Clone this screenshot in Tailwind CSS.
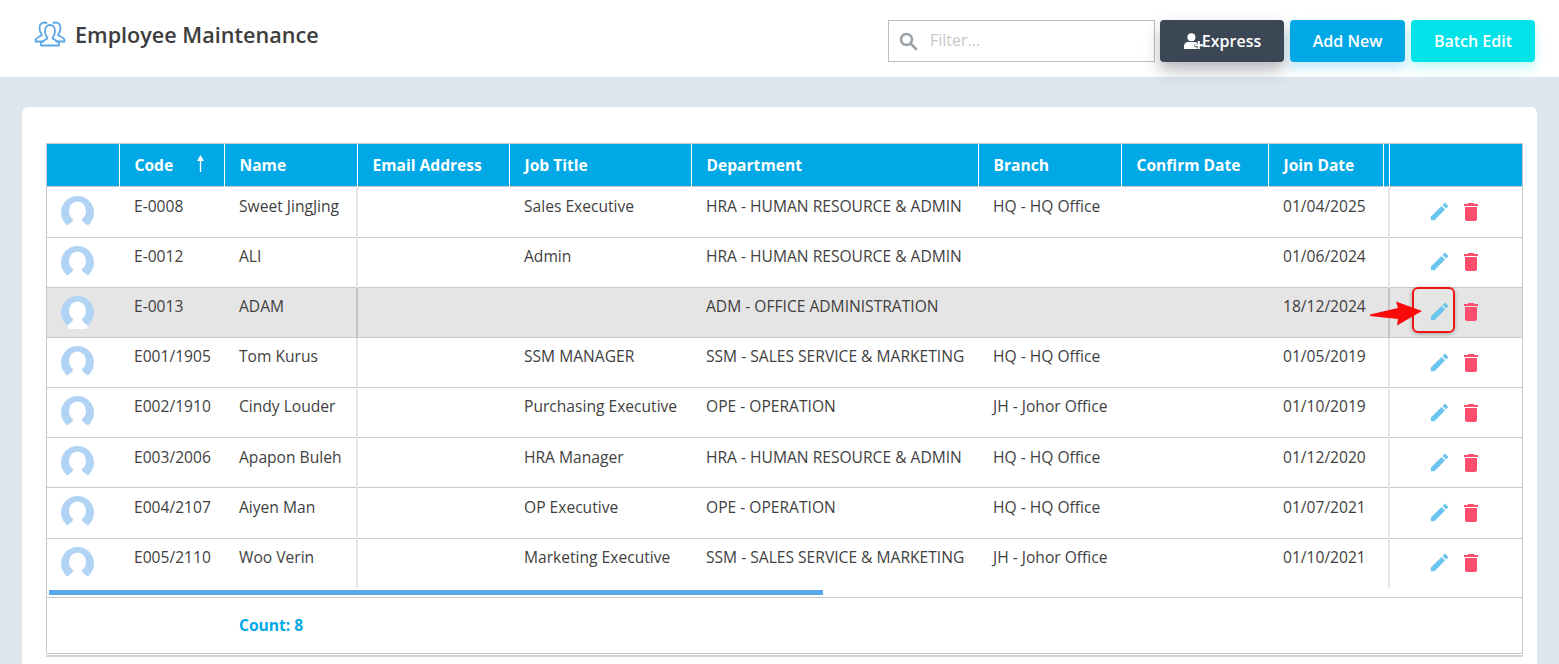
<!DOCTYPE html>
<html lang="en">
<head>
  <meta charset="UTF-8">
  <title>Employee Maintenance</title>
  <script src="https://cdn.jsdelivr.net/npm/@tailwindcss/browser@4"></script>
</head>
<body class="bg-[#dde5ed] h-[664px] overflow-hidden font-['Open_Sans',sans-serif] text-[#3a3a3a]">

  <svg class="hidden">
    <symbol id="avatar" viewBox="0 0 33 33">
      <circle cx="16.5" cy="16.5" r="16.5" fill="#b1d4f4"/>
      <ellipse cx="16.5" cy="15" rx="8.500" ry="9.500" fill="#fff"/>
      <path d="M12.500 20 C13 24 11 26.500 6 29.500 L8 33 H25 L27 29.500 C22 26.500 20 24 20.500 20 Z" fill="#fff"/>
    </symbol>
    <symbol id="pencil" viewBox="0 0 24 24">
      <path d="M3 17.25V21h3.75L17.81 9.94l-3.75-3.75L3 17.25zM20.71 7.04c.39-.39.39-1.02 0-1.41l-2.34-2.34c-.39-.39-1.02-.39-1.41 0l-1.83 1.83 3.75 3.75 1.83-1.83z" fill="#6cc5ef"/>
    </symbol>
    <symbol id="trash" viewBox="0 0 24 24">
      <path d="M6 19c0 1.1.9 2 2 2h8c1.1 0 2-.9 2-2V7H6v12zM19 4h-3.500l-1-1h-5l-1 1H5v2h14V4z" fill="#ff4d6d"/>
    </symbol>
  </svg>

  <!-- top bar -->
  <header class="h-[78px] bg-white border-b border-[#e3e8ee] flex items-start justify-between pl-[34px] pr-[24px]">
    <div class="flex items-center gap-[9px] pt-[20px]">
      <svg class="w-[32px] h-[28px] -mt-[3px]" viewBox="0 0 32 28" fill="none" stroke="#5ea7e6" stroke-width="1.8" stroke-linejoin="round">
        <path d="M10.500 21.500 H1.500 V19.500 C3 17 6.500 16.500 8 15 C6.500 13 5.500 11 5.500 8 C5.500 4.500 7.500 2.500 10.500 2.500 C11.500 2.500 12.500 2.800 13.200 3.300"/>
        <path d="M21.500 21.500 H30.500 V19.500 C29 17 25.500 16.500 24 15 C25.500 13 26.500 11 26.500 8 C26.500 4.500 24.500 2.500 21.500 2.500 C20.500 2.500 19.500 2.800 18.800 3.300"/>
        <path d="M7 25.500 V23 C8.500 20.500 12.500 19.800 13.500 18 C11.800 16 11 14 11 11 C11 7.500 13 5 16 5 C19 5 21 7.500 21 11 C21 14 20.200 16 18.500 18 C19.500 19.800 23.500 20.500 25 23 V25.500 Z"/>
      </svg>
      <h1 class="text-[21.6px] leading-[30px] font-semibold text-[#3d3d3d]">Employee Maintenance</h1>
    </div>
    <div class="flex items-start pt-[20px]">
      <div class="w-[267px] h-[42px] border border-[#bdbdbd] bg-white flex items-center pl-[10px] gap-[12px] mr-[5px]">
        <svg class="w-[19px] h-[19px]" viewBox="0 0 19 19" fill="none" stroke="#9aa1a8" stroke-width="2.6">
          <circle cx="7.500" cy="7.500" r="5.500"/>
          <path d="M11.500 11.500 L17 17" stroke-linecap="round"/>
        </svg>
        <span class="text-[16px] text-[#c8c8c8] -mt-[2px]">Filter...</span>
      </div>
      <button class="w-[124px] h-[42px] bg-[#3b4754] rounded-[4px] text-white text-[16px] font-semibold flex items-center justify-center shadow-[0_8px_16px_rgba(40,50,60,0.35)] mr-[6px]">
        <svg class="w-[19px] h-[16px] ml-[1px]" viewBox="0 0 18 15" fill="#fff">
          <circle cx="7" cy="4" r="3.800"/>
          <path d="M0 15 V12.500 C0 10 2 8.500 4 8.500 H10 C11 8.500 11.800 8.800 12.500 9.300 V10.500 H10 V13.500 H12.500 V15 Z"/>
          <path d="M13 7.500 H15 V10.500 H18 V12.500 H15 V15 H13 V12.500 H10.500 V10.500 H13 Z"/>
        </svg>
        <span class="-ml-[1px]">Express</span>
      </button>
      <button class="w-[115px] h-[42px] bg-[#00a9e6] rounded-[4px] text-white text-[16px] font-semibold shadow-[0_6px_12px_rgba(0,169,230,0.25)] mr-[6px]">Add New</button>
      <button class="w-[124px] h-[42px] bg-[#00e3e9] rounded-[4px] text-white text-[16px] font-semibold shadow-[0_6px_12px_rgba(0,227,233,0.25)]">Batch Edit</button>
    </div>
  </header>

  <main class="px-[22px] pt-[29px]">
    <section class="bg-white rounded-t-[6px] pt-[36px] px-[24px] h-[557px]">
      <div class="relative w-[1477px] border-x border-t border-[#c9c9c9]">
        <table class="table-fixed w-[1475px] border-collapse text-[15.6px] leading-[22px] text-[#3f3f3f]">
          <colgroup>
            <col class="w-[72px]"><col class="w-[105px]"><col class="w-[133px]"><col class="w-[152px]"><col class="w-[182px]"><col class="w-[287px]"><col class="w-[143px]"><col class="w-[147px]"><col class="w-[115px]"><col class="w-[6px]"><col class="w-[133px]">
          </colgroup>
          <thead>
            <tr class="h-[42px] bg-[#00a9e6] text-white text-left border-b border-[#c9c9c9]">
              <th class="border-r border-white"></th>
              <th class="border-r border-white pl-[15px] font-bold">
                <div class="flex items-center justify-between pr-[19px]">Code
                  <svg class="w-[9px] h-[17px] mb-[3px]" viewBox="0 0 9 17" fill="#fff"><path d="M4.500 0 L8 6 H5.200 V17 H3.800 V6 H1 Z"/></svg>
                </div>
              </th>
              <th class="border-r border-white pl-[15px] font-bold">Name</th>
              <th class="border-r border-white pl-[15px] font-bold">Email Address</th>
              <th class="border-r border-white pl-[15px] font-bold">Job Title</th>
              <th class="border-r border-white pl-[15px] font-bold">Department</th>
              <th class="border-r border-white pl-[15px] font-bold">Branch</th>
              <th class="border-r border-white pl-[15px] font-bold">Confirm Date</th>
              <th class="border-r border-white pl-[15px] font-bold">Join Date</th>
              <th class="border-r border-white"></th>
              <th></th>
            </tr>
          </thead>
          <tbody>
            <tr class="h-[51px] border-b border-[#c9c9c9]">
              <td class="pl-[14px] align-top pt-[9px]"><svg class="w-[33px] h-[33px]"><use href="#avatar"/></svg></td>
              <td class="pl-[15px] align-top pt-[8px]">E-0008</td>
              <td class="pl-[15px] align-top pt-[8px] border-r-2 border-[#e6e6e6]">Sweet JingJing</td>
              <td></td>
              <td class="pl-[15px] align-top pt-[8px]">Sales Executive</td>
              <td class="pl-[15px] align-top pt-[8px] whitespace-nowrap">HRA - HUMAN RESOURCE &amp; ADMIN</td>
              <td class="pl-[15px] align-top pt-[8px]">HQ - HQ Office</td>
              <td></td>
              <td class="pl-[15px] align-top pt-[8px]">01/04/2025</td>
              <td class="border-r-2 border-[#e6e6e6]"></td>
              <td class="align-top pt-[13px] pl-[38px]"><div class="flex items-center gap-[8px]"><svg class="w-[23px] h-[23px]"><use href="#pencil"/></svg><svg class="w-[24px] h-[24px]"><use href="#trash"/></svg></div></td>
            </tr>
            <tr class="h-[50px] border-b border-[#c9c9c9]">
              <td class="pl-[14px] align-top pt-[8px]"><svg class="w-[33px] h-[33px]"><use href="#avatar"/></svg></td>
              <td class="pl-[15px] align-top pt-[7px]">E-0012</td>
              <td class="pl-[15px] align-top pt-[7px] border-r-2 border-[#e6e6e6]">ALI</td>
              <td></td>
              <td class="pl-[15px] align-top pt-[7px]">Admin</td>
              <td class="pl-[15px] align-top pt-[7px] whitespace-nowrap">HRA - HUMAN RESOURCE &amp; ADMIN</td>
              <td></td>
              <td></td>
              <td class="pl-[15px] align-top pt-[7px]">01/06/2024</td>
              <td class="border-r-2 border-[#e6e6e6]"></td>
              <td class="align-top pt-[12px] pl-[38px]"><div class="flex items-center gap-[8px]"><svg class="w-[23px] h-[23px]"><use href="#pencil"/></svg><svg class="w-[24px] h-[24px]"><use href="#trash"/></svg></div></td>
            </tr>
            <tr class="h-[50px] border-b border-[#c9c9c9] bg-[#e5e5e5]">
              <td class="pl-[14px] align-top pt-[8px]"><svg class="w-[33px] h-[33px]"><use href="#avatar"/></svg></td>
              <td class="pl-[15px] align-top pt-[7px]">E-0013</td>
              <td class="pl-[15px] align-top pt-[7px] border-r-2 border-[#c4c4c4]">ADAM</td>
              <td></td>
              <td></td>
              <td class="pl-[15px] align-top pt-[7px] whitespace-nowrap">ADM - OFFICE ADMINISTRATION</td>
              <td></td>
              <td></td>
              <td class="pl-[15px] align-top pt-[7px]">18/12/2024</td>
              <td class="border-r-2 border-[#c4c4c4]"></td>
              <td class="align-top pt-[12px] pl-[38px]"><div class="flex items-center gap-[8px]"><svg class="w-[23px] h-[23px]"><use href="#pencil"/></svg><svg class="w-[24px] h-[24px]"><use href="#trash"/></svg></div></td>
            </tr>
            <tr class="h-[50px] border-b border-[#c9c9c9]">
              <td class="pl-[14px] align-top pt-[8px]"><svg class="w-[33px] h-[33px]"><use href="#avatar"/></svg></td>
              <td class="pl-[15px] align-top pt-[7px]">E001/1905</td>
              <td class="pl-[15px] align-top pt-[7px] border-r-2 border-[#e6e6e6]">Tom Kurus</td>
              <td></td>
              <td class="pl-[15px] align-top pt-[7px]">SSM MANAGER</td>
              <td class="pl-[15px] align-top pt-[7px] whitespace-nowrap">SSM - SALES SERVICE &amp; MARKETING</td>
              <td class="pl-[15px] align-top pt-[7px]">HQ - HQ Office</td>
              <td></td>
              <td class="pl-[15px] align-top pt-[7px]">01/05/2019</td>
              <td class="border-r-2 border-[#e6e6e6]"></td>
              <td class="align-top pt-[13px] pl-[38px]"><div class="flex items-center gap-[8px]"><svg class="w-[23px] h-[23px]"><use href="#pencil"/></svg><svg class="w-[24px] h-[24px]"><use href="#trash"/></svg></div></td>
            </tr>
            <tr class="h-[50px] border-b border-[#c9c9c9]">
              <td class="pl-[14px] align-top pt-[8px]"><svg class="w-[33px] h-[33px]"><use href="#avatar"/></svg></td>
              <td class="pl-[15px] align-top pt-[7px]">E002/1910</td>
              <td class="pl-[15px] align-top pt-[7px] border-r-2 border-[#e6e6e6]">Cindy Louder</td>
              <td></td>
              <td class="pl-[15px] align-top pt-[7px] whitespace-nowrap">Purchasing Executive</td>
              <td class="pl-[15px] align-top pt-[7px] whitespace-nowrap">OPE - OPERATION</td>
              <td class="pl-[15px] align-top pt-[7px]">JH - Johor Office</td>
              <td></td>
              <td class="pl-[15px] align-top pt-[7px]">01/10/2019</td>
              <td class="border-r-2 border-[#e6e6e6]"></td>
              <td class="align-top pt-[13px] pl-[38px]"><div class="flex items-center gap-[8px]"><svg class="w-[23px] h-[23px]"><use href="#pencil"/></svg><svg class="w-[24px] h-[24px]"><use href="#trash"/></svg></div></td>
            </tr>
            <tr class="h-[50px] border-b border-[#c9c9c9]">
              <td class="pl-[14px] align-top pt-[8px]"><svg class="w-[33px] h-[33px]"><use href="#avatar"/></svg></td>
              <td class="pl-[15px] align-top pt-[8px]">E003/2006</td>
              <td class="pl-[15px] align-top pt-[8px] border-r-2 border-[#e6e6e6]">Apapon Buleh</td>
              <td></td>
              <td class="pl-[15px] align-top pt-[8px]">HRA Manager</td>
              <td class="pl-[15px] align-top pt-[8px] whitespace-nowrap">HRA - HUMAN RESOURCE &amp; ADMIN</td>
              <td class="pl-[15px] align-top pt-[8px]">HQ - HQ Office</td>
              <td></td>
              <td class="pl-[15px] align-top pt-[8px]">01/12/2020</td>
              <td class="border-r-2 border-[#e6e6e6]"></td>
              <td class="align-top pt-[13px] pl-[38px]"><div class="flex items-center gap-[8px]"><svg class="w-[23px] h-[23px]"><use href="#pencil"/></svg><svg class="w-[24px] h-[24px]"><use href="#trash"/></svg></div></td>
            </tr>
            <tr class="h-[51px] border-b border-[#c9c9c9]">
              <td class="pl-[14px] align-top pt-[8px]"><svg class="w-[33px] h-[33px]"><use href="#avatar"/></svg></td>
              <td class="pl-[15px] align-top pt-[8px]">E004/2107</td>
              <td class="pl-[15px] align-top pt-[8px] border-r-2 border-[#e6e6e6]">Aiyen Man</td>
              <td></td>
              <td class="pl-[15px] align-top pt-[8px]">OP Executive</td>
              <td class="pl-[15px] align-top pt-[8px] whitespace-nowrap">OPE - OPERATION</td>
              <td class="pl-[15px] align-top pt-[8px]">HQ - HQ Office</td>
              <td></td>
              <td class="pl-[15px] align-top pt-[8px]">01/07/2021</td>
              <td class="border-r-2 border-[#e6e6e6]"></td>
              <td class="align-top pt-[13px] pl-[38px]"><div class="flex items-center gap-[8px]"><svg class="w-[23px] h-[23px]"><use href="#pencil"/></svg><svg class="w-[24px] h-[24px]"><use href="#trash"/></svg></div></td>
            </tr>
            <tr class="h-[50px]">
              <td class="pl-[14px] align-top pt-[8px]"><svg class="w-[33px] h-[33px]"><use href="#avatar"/></svg></td>
              <td class="pl-[15px] align-top pt-[7px]">E005/2110</td>
              <td class="pl-[15px] align-top pt-[7px] border-r-2 border-[#e6e6e6]">Woo Verin</td>
              <td></td>
              <td class="pl-[15px] align-top pt-[7px] whitespace-nowrap">Marketing Executive</td>
              <td class="pl-[15px] align-top pt-[7px] whitespace-nowrap">SSM - SALES SERVICE &amp; MARKETING</td>
              <td class="pl-[15px] align-top pt-[7px]">JH - Johor Office</td>
              <td></td>
              <td class="pl-[15px] align-top pt-[7px]">01/10/2021</td>
              <td class="border-r-2 border-[#e6e6e6]"></td>
              <td class="align-top pt-[12px] pl-[38px]"><div class="flex items-center gap-[8px]"><svg class="w-[23px] h-[23px]"><use href="#pencil"/></svg><svg class="w-[24px] h-[24px]"><use href="#trash"/></svg></div></td>
            </tr>
          </tbody>
        </table>

        <!-- horizontal scrollbar + footer -->
        <div class="pl-[2px] h-[9px] pt-[2px]"><div class="w-[774px] h-[5px] bg-[#5ba8e8]"></div></div>
        <div class="h-[57px] border-y border-[#c9c9c9] pl-[192px] flex items-center">
          <span class="text-[15.6px] font-bold text-[#00a9e6]">Count: 8</span>
        </div>

        <!-- callout over the edit button of the selected row -->
        <div class="absolute left-[1365px] top-[143px] w-[43px] h-[46px] border-2 border-[#f01414] rounded-[6px] shadow-[0_1px_4px_rgba(0,0,0,0.3)]"></div>
        <svg class="absolute left-[1323px] top-[157px] w-[54px] h-[25px]" viewBox="0 0 54 25">
          <path d="M0 13.500 L28 7 L26 0.500 L52 10 L27 24.500 L28 18 L0 15 Z" fill="#fb0a0a"/>
        </svg>
      </div>
      <div class="w-[1477px] h-[2px] mt-[1px] bg-[#d4d4d4]"></div>
    </section>
  </main>

</body>
</html>
